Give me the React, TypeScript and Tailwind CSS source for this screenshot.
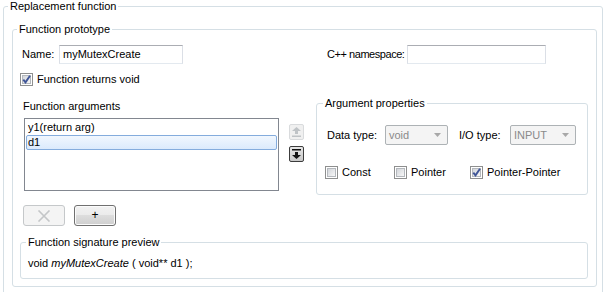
import React from "react";

function Check({ checked = false }: { checked?: boolean }) {
  return (
    <span className="relative flex h-[13px] w-[13px] shrink-0 items-center justify-center border border-[#8e8f8f] bg-white">
      <span className="h-[9px] w-[9px] border border-[#b4b8bd] bg-[linear-gradient(135deg,#d2d5da,#f7f7f7)]" />
      {checked && (
        <svg className="absolute left-[0px] top-[0px]" width="11" height="11" viewBox="0 0 11 11">
          <path d="M2.3 5.6 L4.5 8.4 L9 1.8" fill="none" stroke="#3f5597" strokeWidth="1.9" />
        </svg>
      )}
    </span>
  );
}

function TextBox({ value, w }: { value?: string; w: string }) {
  return (
    <div
      className={`flex h-[19px] ${w} shrink-0 items-center border border-[#dbdfe6] border-t-[#abadb3] border-b-[#e3e9ef] bg-white pl-[3px]`}
    >
      {value}
    </div>
  );
}

function Combo({ value, w }: { value: string; w: string }) {
  return (
    <div
      className={`flex h-[20px] ${w} items-center justify-between rounded-[2px] border border-[#adb2b5] bg-[#f4f4f4] pl-[3px] pr-[6px] text-[#8a8a8a]`}
    >
      <span>{value}</span>
      <svg width="7" height="4" viewBox="0 0 7 4">
        <polygon points="0,0 7,0 3.5,4" fill="#a8a8a8" />
      </svg>
    </div>
  );
}

export default function App() {
  return (
    <div className="h-[292px] w-[608px] overflow-hidden whitespace-nowrap bg-white font-['Liberation_Sans',Arial,sans-serif] text-[11px] leading-[13px] text-black">
      <fieldset className="ml-[3px] h-[320px] w-[600px] rounded-[3px] border border-[#d5dfe5]">
        <legend className="ml-[4px] px-[2px]">Replacement function</legend>
        <div className="pl-[8px] pt-[10px]">
          <fieldset className="h-[264px] w-[585px] rounded-[3px] border border-[#d5dfe5]">
            <legend className="ml-[4px] px-[2px]">Function prototype</legend>
            <div className="pl-[7px] pt-[9px]">
              {/* Row 1 */}
              <div className="flex h-[19px] items-center">
                <div className="flex w-[296px] items-center">
                  <span className="ml-[2px] w-[37px]">Name:</span>
                  <TextBox value="myMutexCreate" w="w-[124px]" />
                </div>
                <div className="flex items-center pl-[11px]">
                  <span className="mr-[3px] shrink-0 tracking-[-0.45px]">C++ namespace:</span>
                  <TextBox w="w-[139px]" />
                </div>
              </div>

              {/* Row 2 */}
              <div className="mt-[9px] flex h-[13px] items-center gap-[4px]">
                <Check checked />
                <span>Function returns void</span>
              </div>

              {/* Row 3 */}
              <div className="mt-[11px] flex items-start">
                <div className="w-[296px] pt-[3px]">
                  <div className="ml-[3px]">Function arguments</div>
                  <div className="mt-[5px] flex items-start">
                    <div className="ml-[4px] h-[73px] w-[255px] border border-[#828790] bg-white pt-[1px]">
                      <div className="mx-[1px] flex h-[15px] items-center pl-[2px]">y1(return arg)</div>
                      <div className="mx-[1px] flex h-[15px] items-center rounded-[2px] border border-[#84acdd] bg-[linear-gradient(#f1f7fe,#dbeafc)] pl-[1px]">
                        d1
                      </div>
                    </div>
                    <div className="ml-[10px] mt-[6px] flex flex-col gap-[6px]">
                      <div className="flex h-[16px] w-[15px] items-center justify-center rounded-[2px] border border-[#d9dbdd] bg-[#f0f0f0]">
                        <svg width="9" height="10" viewBox="0 0 9 10">
                          <polygon points="4.5,0 0,4 9,4" fill="#bfc3c6" />
                          <rect x="3" y="4" width="3" height="3" fill="#bfc3c6" />
                          <rect x="0" y="8.5" width="9" height="1.5" fill="#bfc3c6" />
                        </svg>
                      </div>
                      <div className="flex h-[16px] w-[15px] items-center justify-center rounded-[2px] border border-[#3c3c3c] bg-[linear-gradient(#e6e6e6,#c8c8c8)]">
                        <svg width="9" height="10" viewBox="0 0 9 10">
                          <rect x="0" y="0" width="9" height="1.5" fill="#111" />
                          <rect x="3" y="3" width="3" height="3" fill="#111" />
                          <polygon points="0,6 9,6 4.5,10" fill="#111" />
                        </svg>
                      </div>
                    </div>
                  </div>
                  <div className="ml-[3px] mt-[14px] flex gap-[9px]">
                    <div className="flex h-[21px] w-[42px] items-center justify-center rounded-[3px] border border-[#c5c8ca] bg-[#f4f4f4]">
                      <svg width="14" height="12" viewBox="0 0 14 12">
                        <path d="M1.5 0.5 L12.5 11.5 M12.5 0.5 L1.5 11.5" stroke="#c4c6c8" strokeWidth="1.6" />
                      </svg>
                    </div>
                    <div className="flex h-[21px] w-[42px] items-center justify-center rounded-[3px] border border-[#707070] bg-[linear-gradient(#f2f2f2_0%,#ebebeb_50%,#dddddd_50%,#cfcfcf_100%)] text-[12px] shadow-[inset_0_0_0_1px_#fbfbfb]">
                      +
                    </div>
                  </div>
                </div>

                <fieldset className="h-[98px] w-[272px] rounded-[3px] border border-[#d5dfe5]">
                  <legend className="ml-[6px] px-[2px]">Argument properties</legend>
                  <div className="pl-[10px] pt-[15px]">
                    <div className="flex items-center">
                      <span className="w-[58px]">Data type:</span>
                      <Combo value="void" w="w-[63px]" />
                      <span className="ml-[11px] w-[51px]">I/O type:</span>
                      <Combo value="INPUT" w="w-[66px]" />
                    </div>
                    <div className="ml-[-2px] mt-[21px] flex items-center">
                      <div className="flex w-[69px] items-center gap-[4px]">
                        <Check />
                        <span>Const</span>
                      </div>
                      <div className="flex w-[76px] items-center gap-[4px]">
                        <Check />
                        <span>Pointer</span>
                      </div>
                      <div className="flex items-center gap-[4px]">
                        <Check checked />
                        <span>Pointer-Pointer</span>
                      </div>
                    </div>
                  </div>
                </fieldset>
              </div>

              {/* Signature preview */}
              <fieldset className="mt-[10px] h-[43px] w-[568px] rounded-[3px] border border-[#d5dfe5]">
                <legend className="ml-[5px] px-[2px]">Function signature preview</legend>
                <div className="pl-[7px] pt-[8px]">
                  void <i>myMutexCreate</i> ( void** d1 );
                </div>
              </fieldset>
            </div>
          </fieldset>
        </div>
      </fieldset>
    </div>
  );
}
